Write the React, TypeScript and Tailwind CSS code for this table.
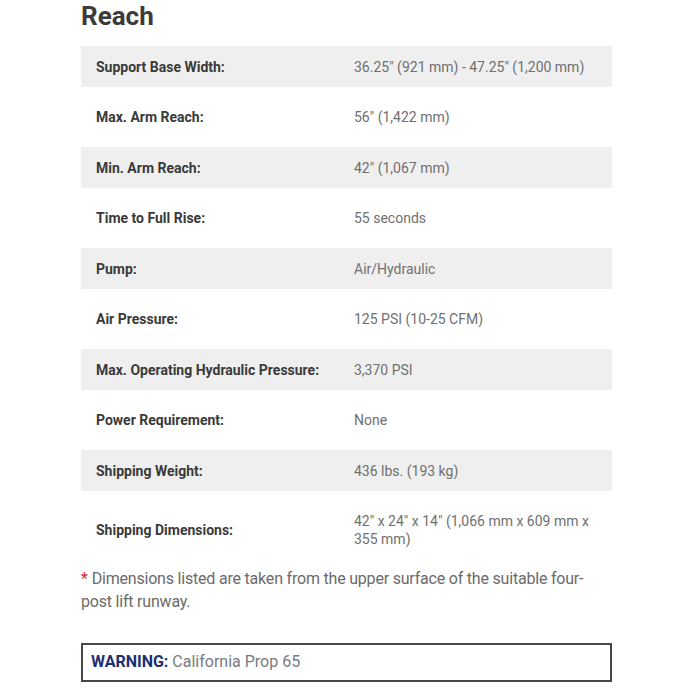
const specs: [string, string][] = [
  ['Support Base Width:', '36.25" (921 mm) - 47.25" (1,200 mm)'],
  ['Max. Arm Reach:', '56" (1,422 mm)'],
  ['Min. Arm Reach:', '42" (1,067 mm)'],
  ['Time to Full Rise:', '55 seconds'],
  ['Pump:', 'Air/Hydraulic'],
  ['Air Pressure:', '125 PSI (10-25 CFM)'],
  ['Max. Operating Hydraulic Pressure:', '3,370 PSI'],
  ['Power Requirement:', 'None'],
  ['Shipping Weight:', '436 lbs. (193 kg)'],
  ['Shipping Dimensions:', '42" x 24" x 14" (1,066 mm x 609 mm x 355 mm)'],
]

export default function App() {
  return (
    <div className="w-[700px] h-[700px] bg-white pl-[81px] pt-[1px] font-['Roboto',sans-serif]">
      <div className="w-[531px]">
        <h2 className="text-[26px] leading-[30px] font-bold text-[#3b3b3b]">Reach</h2>

        {/* Spec table */}
        <div className="mt-[15px] flex flex-col gap-[9.5px]">
          {specs.map(([label, value], i) => (
            <div
              key={label}
              className={`flex items-center py-[11.5px] ${i % 2 === 0 ? 'bg-[#efefef]' : 'bg-white'}`}
            >
              <div className="w-[273px] pl-[15px] text-[14px] leading-[18px] font-bold text-[#3a3a3a]">
                {label}
              </div>
              <div className="flex-1 pr-[8px] text-[14px] leading-[18px] text-[#707070]">{value}</div>
            </div>
          ))}
        </div>

        <p className="mt-[7px] text-[16px] leading-[23px] text-[#6b6b6b] tracking-[-0.2px]">
          <span className="inline-block mr-[4px] text-[#d9262c]">*</span>Dimensions listed are taken from the upper surface of the suitable four-post lift runway.
        </p>

        <div className="mt-[30px] border-2 border-[#474747] px-[8px] py-[6.5px] text-[16px] leading-[22px]">
          <span className="font-bold text-[#1c2f73]">WARNING:</span>{' '}
          <span className="text-[#767b85]">California Prop 65</span>
        </div>
      </div>
    </div>
  )
}
